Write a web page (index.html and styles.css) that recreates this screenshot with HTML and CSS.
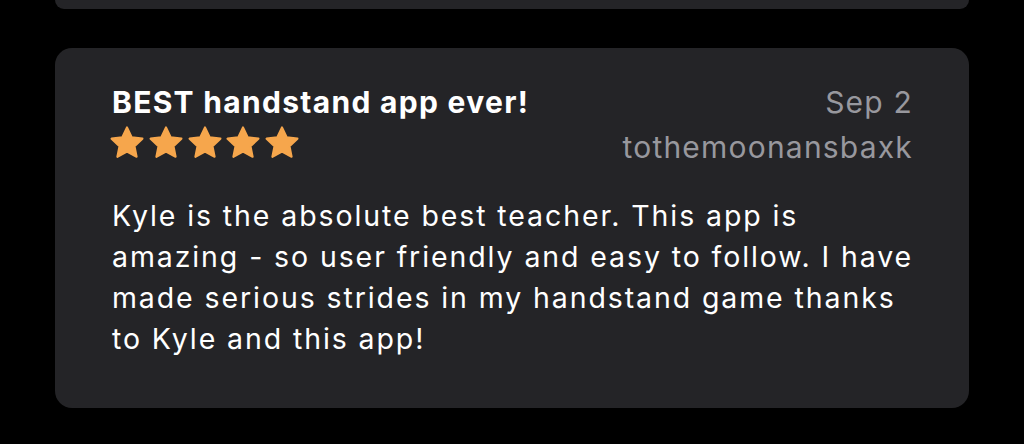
FILE: index.html
```html
<!DOCTYPE html>
<html lang="en">
<head>
  <meta charset="UTF-8">
  <title>Ratings &amp; Reviews</title>
  <link rel="stylesheet" href="styles.css">
</head>
<body>
  <div class="reviews">
    <div class="review review-prev"></div>

    <div class="review">
      <div class="review-head">
        <div class="review-left">
          <div class="review-title">BEST handstand app ever!</div>
          <div class="stars">
            <svg viewBox="0 0 24 24"><path d="M12 1.6l3.1 6.6 7.2.9-5.3 5 1.4 7.1L12 17.7l-6.4 3.5L7 14.1l-5.3-5 7.2-.9z"/></svg>
            <svg viewBox="0 0 24 24"><path d="M12 1.6l3.1 6.6 7.2.9-5.3 5 1.4 7.1L12 17.7l-6.4 3.5L7 14.1l-5.3-5 7.2-.9z"/></svg>
            <svg viewBox="0 0 24 24"><path d="M12 1.6l3.1 6.6 7.2.9-5.3 5 1.4 7.1L12 17.7l-6.4 3.5L7 14.1l-5.3-5 7.2-.9z"/></svg>
            <svg viewBox="0 0 24 24"><path d="M12 1.6l3.1 6.6 7.2.9-5.3 5 1.4 7.1L12 17.7l-6.4 3.5L7 14.1l-5.3-5 7.2-.9z"/></svg>
            <svg viewBox="0 0 24 24"><path d="M12 1.6l3.1 6.6 7.2.9-5.3 5 1.4 7.1L12 17.7l-6.4 3.5L7 14.1l-5.3-5 7.2-.9z"/></svg>
          </div>
        </div>
        <div class="review-meta">
          <div class="review-date">Sep 2</div>
          <div class="review-author">tothemoonansbaxk</div>
        </div>
      </div>
      <p class="review-body">Kyle is the absolute best teacher. This app is amazing - so user friendly and easy to follow. I have made serious strides in my handstand game thanks to Kyle and this app!</p>
    </div>
  </div>
</body>
</html>
```

FILE: styles.css
```css
body {
  margin: 0;
  padding: 0;
  background-color: #000;
  font-family: Inter, "Noto Sans", sans-serif;
  color: #fff;
  height: 444px;
  overflow: hidden;
}

.reviews {
  padding: 0 55px;
  display: flex;
  flex-direction: column;
  gap: 39px;
}

.review {
  background-color: #242427;
  border-radius: 17px;
  padding: 32px 57px 0 57px;
  height: 328px;
}

.review-prev {
  height: 9px;
  padding: 0;
  border-radius: 0 0 17px 17px;
}

.review-head {
  display: flex;
  justify-content: space-between;
}

.review-title {
  font-size: 30px;
  font-weight: 700;
  line-height: 44px;
  letter-spacing: 1.3px;
}

.stars {
  display: flex;
  gap: 2.75px;
  margin: 1px 0 0 -3px;
}

.stars svg {
  width: 36px;
  height: 36px;
  fill: #f6a64c;
  stroke: #f6a64c;
  stroke-width: 1.4;
  stroke-linejoin: round;
}

.review-meta {
  text-align: right;
  color: #98989e;
  font-size: 30px;
  letter-spacing: 1.2px;
}

.review-date {
  line-height: 44px;
  margin-right: -1px;
}

.review-author {
  line-height: 44px;
  margin-top: 1px;
  margin-right: -1px;
}

.review-body {
  margin: 26px -14px 0 0;
  font-size: 28.5px;
  line-height: 41px;
  letter-spacing: 1.9px;
}
```
